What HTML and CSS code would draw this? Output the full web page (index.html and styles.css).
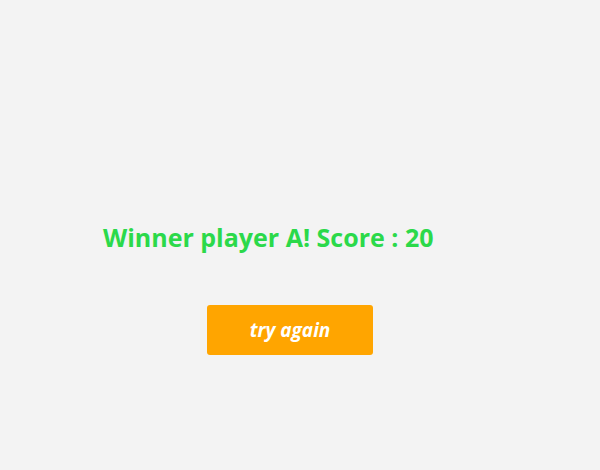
FILE: index.html
```html
<!DOCTYPE html>
<html>
<head>
<meta charset="utf-8">
<link rel="stylesheet" href="styles.css">
</head>
<body>
<main class="screen">
  <h2 class="result">Winner player A! Score : 20</h2>
  <button class="retry">try again</button>
</main>
</body>
</html>
```
FILE: styles.css
```css
html, body {
  margin: 0;
  padding: 0;
  background: #f3f3f3;
  width: 600px;
  height: 470px;
  overflow: hidden;
}
.screen {
  display: flex;
  flex-direction: column;
  align-items: flex-start;
  padding-top: 220px;
  font-family: "Open Sans", "Noto Sans", sans-serif;
}
.result {
  margin: 0 0 0 103px;
  font-size: 25px;
  line-height: 34px;
  font-weight: 700;
  color: #2bd94a;
}
.retry {
  margin: 51px 0 0 207px;
  width: 166px;
  height: 50px;
  border: none;
  border-radius: 3px;
  background: #ffa500;
  color: #ffffff;
  font-family: "Open Sans", "Noto Sans", sans-serif;
  font-size: 19px;
  font-weight: 700;
  font-style: italic;
  padding: 0;
}
```
